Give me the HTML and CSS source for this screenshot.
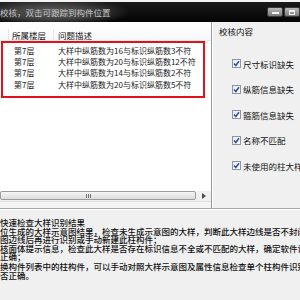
FILE: index.html
```html
<!DOCTYPE html>
<html>
<head>
<meta charset="utf-8">
<link rel="stylesheet" href="styles.css">
</head>
<body>
<div class="window">
  <div class="topstrip"></div>
  <div class="titlebar">
    <span class="title">校核，双击可跟踪到构件位置</span>
    <div class="ctrls">
      <span class="btn"><span class="dash"></span></span>
      <span class="btn"><span class="square"></span></span>
    </div>
  </div>
  <div class="main">
    <div class="list">
      <div class="header">
        <span class="col0"></span>
        <span class="col1">所属楼层</span>
        <span class="col2">问题描述</span>
      </div>
      <div class="rows">
        <div class="row"><span class="col1">第7层</span><span class="col2">大样中纵筋数为16与标识纵筋数3不符</span></div>
        <div class="row"><span class="col1">第7层</span><span class="col2">大样中纵筋数为20与标识纵筋数12不符</span></div>
        <div class="row"><span class="col1">第7层</span><span class="col2">大样中纵筋数为14与标识纵筋数2不符</span></div>
        <div class="row"><span class="col1">第7层</span><span class="col2">大样中纵筋数为20与标识纵筋数5不符</span></div>
      </div>
      <div class="fill"></div>
      <div class="hscroll">
        <div class="thumb"><span class="grip"></span></div>
        <div class="arrow"><svg width="4" height="6" viewBox="0 0 4 6"><path d="M0 0 L4 3 L0 6 Z" fill="#4a4a4a"/></svg></div>
      </div>
      <div class="listfoot"></div>
    </div>
    <div class="panel">
      <div class="legend">校核内容</div>
      <div class="checks">
        <label class="check"><span class="box"><svg width="7" height="7" viewBox="0 0 7 7"><path d="M1 3.6 L2.8 5.5 L6 1.2" fill="none" stroke="#2c4f9e" stroke-width="1.5"/></svg></span>尺寸标识缺失</label>
        <label class="check"><span class="box"><svg width="7" height="7" viewBox="0 0 7 7"><path d="M1 3.6 L2.8 5.5 L6 1.2" fill="none" stroke="#2c4f9e" stroke-width="1.5"/></svg></span>纵筋信息缺失</label>
        <label class="check"><span class="box"><svg width="7" height="7" viewBox="0 0 7 7"><path d="M1 3.6 L2.8 5.5 L6 1.2" fill="none" stroke="#2c4f9e" stroke-width="1.5"/></svg></span>箍筋信息缺失</label>
        <label class="check"><span class="box"><svg width="7" height="7" viewBox="0 0 7 7"><path d="M1 3.6 L2.8 5.5 L6 1.2" fill="none" stroke="#2c4f9e" stroke-width="1.5"/></svg></span>名称不匹配</label>
        <label class="check"><span class="box"><svg width="7" height="7" viewBox="0 0 7 7"><path d="M1 3.6 L2.8 5.5 L6 1.2" fill="none" stroke="#2c4f9e" stroke-width="1.5"/></svg></span>未使用的柱大样</label>
      </div>
    </div>
  </div>
  <div class="help">
    <div class="line">快速检查大样识别结果</div>
    <div class="line">位生成的大样示意图结果，检查未生成示意图的大样，判断此大样边线是否不封闭</div>
    <div class="line">图边线后再进行识别或手动新建此柱构件；</div>
    <div class="line">核面体提示信息，检查此大样是否存在标识信息不全或不匹配的大样，确定软件识别</div>
    <div class="line">正确；</div>
    <div class="line gap">换构件列表中的柱构件，可以手动对照大样示意图及属性信息检查单个柱构件识别</div>
    <div class="line">否正确。</div>
  </div>
</div>
</body>
</html>
```
FILE: styles.css
```css
html, body {
  margin: 0;
  padding: 0;
  width: 300px;
  height: 300px;
  overflow: hidden;
  background: #f0f0f0;
}

.window {
  width: 300px;
  height: 300px;
  display: flex;
  flex-direction: column;
  font-family: "Noto Sans CJK SC", "Noto Sans", sans-serif;
  font-size: 8.5px;
  color: #111;
}

.topstrip {
  height: 2px;
  flex: none;
  background: #f4f4f4;
}

.titlebar {
  height: 20px;
  flex: none;
  display: flex;
  align-items: center;
  justify-content: space-between;
  background:
    radial-gradient(ellipse 78px 14px at 52px 10px, #5e5e5e 0%, #3e3e3e 55%, rgba(20,20,20,0) 100%),
    linear-gradient(#1a1a1a, #050505);
}

.title {
  color: #c4c4c4;
  white-space: nowrap;
  line-height: 20px;
}

.ctrls {
  display: flex;
  gap: 1px;
  align-self: flex-start;
  margin-top: 5px;
}

.btn {
  width: 16px;
  height: 10px;
  border-radius: 2px;
  background: linear-gradient(#b9b9b9, #7a7a7a);
  border: 1px solid #3a3a3a;
  display: flex;
  align-items: center;
  justify-content: center;
  box-sizing: border-box;
}

.dash {
  width: 7px;
  height: 2px;
  background: #f4f4f4;
  margin-top: 2px;
}

.square {
  width: 6px;
  height: 5px;
  border: 1px solid #f0f0f0;
  border-top-width: 2px;
  box-sizing: border-box;
}

.main {
  height: 186px;
  flex: none;
  display: flex;
  border-bottom: 1px solid #a8a8a8;
  box-shadow: 0 1px 0 #ffffff;
}

.list {
  width: 211px;
  background: #ffffff;
  border-right: 1px solid #9a9a9a;
  display: flex;
  flex-direction: column;
}

.header {
  margin-top: 1px;
  padding-top: 6px;
  height: 11px;
  display: flex;
  align-items: center;
  background: linear-gradient(#ffffff, #f7f8fa);
  border-bottom: 1px solid #e3e6ea;
}

.col0 {
  width: 8px;
  align-self: stretch;
  border-right: 1px solid #e2e4e8;
}

.col1 {
  width: 45px;
  padding-left: 3px;
  box-sizing: border-box;
  white-space: nowrap;
}

.header .col1 {
  border-right: 1px solid #e2e4e8;
  align-self: stretch;
  display: flex;
  align-items: center;
}

.col2 {
  padding-left: 4px;
  white-space: nowrap;
}

.rows {
  margin-left: 1px;
  width: 204px;
  border: 2px solid #e0131d;
  box-sizing: border-box;
  padding: 2px 0 6px 9px;
}

.row {
  display: flex;
  height: 11.2px;
  line-height: 11.2px;
  align-items: center;
  color: #1a1a1a;
  font-size: 8px;
}

.row .col1 {
  width: 45px;
  padding-left: 2px;
}

.row .col2 {
  padding-left: 1px;
}

.fill {
  flex: 1;
}

.hscroll {
  height: 10px;
  flex: none;
  display: flex;
  background: #f0f0f0;
}

.thumb {
  width: 196px;
  height: 9px;
  border: 1px solid #9c9c9c;
  border-radius: 2px;
  box-sizing: border-box;
  background: linear-gradient(#f6f6f6, #dcdcdc);
  display: flex;
  align-items: center;
  justify-content: center;
}

.grip {
  width: 5px;
  height: 4px;
  margin-left: -20px;
  background: repeating-linear-gradient(90deg, #6e6e6e 0 1px, transparent 1px 2px);
}

.arrow {
  flex: 1;
  display: flex;
  align-items: center;
  justify-content: center;
}

.listfoot {
  height: 6px;
  flex: none;
  background: #f4f4f4;
  border-top: 1px solid #e0e0e0;
}

.panel {
  flex: 1;
  background: #f0f0f0;
  border-left: 1px solid #ffffff;
  padding: 3px 0 0 6px;
  overflow: hidden;
}

.legend {
  line-height: 12px;
  white-space: nowrap;
}

.checks {
  display: flex;
  flex-direction: column;
  gap: 14.5px;
  margin-top: 21px;
  padding-left: 13px;
}

.check {
  display: flex;
  align-items: center;
  gap: 2px;
  height: 11px;
  white-space: nowrap;
}

.box {
  width: 9px;
  height: 9px;
  border: 1px solid #8d95a6;
  box-sizing: border-box;
  background: linear-gradient(135deg, #e4e8ee, #ffffff);
  display: flex;
  align-items: center;
  justify-content: center;
  flex: none;
}

.help {
  flex: 1;
  min-height: 0;
  padding-top: 9px;
  overflow: hidden;
}

.line {
  white-space: nowrap;
  line-height: 8.5px;
  height: 8.5px;
  color: #111;
  font-weight: 500;
}

.line.gap {
  margin-top: 1.5px;
}
```
